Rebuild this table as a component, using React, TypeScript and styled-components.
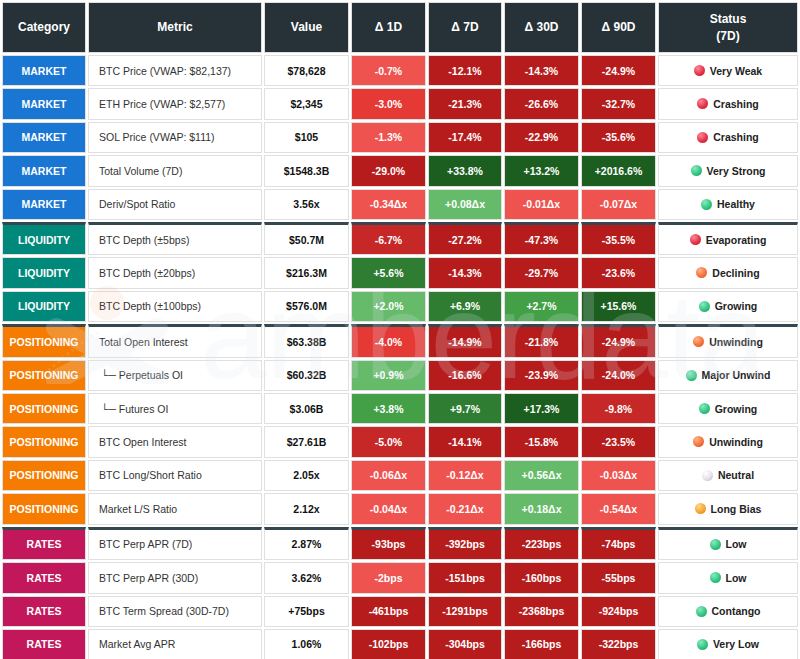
import React from "react";
import styled, { createGlobalStyle } from "styled-components";

const GlobalStyle = createGlobalStyle`
  html, body {
    margin: 0;
    padding: 0;
    background: #ffffff;
  }
  body {
    font-family: "Liberation Sans", Arial, sans-serif;
  }
`;

const Wrapper = styled.div`
  position: relative;
  width: 800px;
  overflow: hidden;
`;

const Table = styled.table`
  width: 800px;
  table-layout: fixed;
  border-collapse: separate;
  border-spacing: 2px;
  font-size: 10.5px;
`;

const Col = styled.col<{ $w: number }>`
  width: ${(p) => p.$w}px;
`;

const HeadCell = styled.th`
  background: #263238;
  color: #ffffff;
  font-size: 12px;
  font-weight: bold;
  line-height: 16.5px;
  padding: 8px 6px;
  border: 1px solid #e0e0e0;
  text-align: center;
`;

const Cell = styled.td<{ $groupStart?: boolean }>`
  border: 1px solid #e0e0e0;
  border-top: ${(p) => (p.$groupStart ? "3px solid #37474f" : "1px solid #e0e0e0")};
  padding: 8.5px 8px;
  line-height: 12.4px;
  text-align: center;
  white-space: nowrap;
  overflow: hidden;
`;

const CategoryCell = styled(Cell)<{ $bg: string }>`
  background: ${(p) => p.$bg};
  color: #ffffff;
  font-weight: bold;
  padding-left: 2px;
  padding-right: 2px;
`;

const MetricCell = styled(Cell)<{ $sub?: boolean }>`
  text-align: left;
  color: #333333;
  padding-left: ${(p) => (p.$sub ? 12 : 10)}px;
`;

const ValueCell = styled(Cell)`
  color: #111111;
  font-weight: bold;
`;

const DeltaCell = styled(Cell)<{ $bg: string }>`
  background: ${(p) => p.$bg};
  color: #ffffff;
  font-weight: bold;
`;

const StatusCell = styled(Cell)`
  color: #222222;
  font-weight: bold;
`;

const Dot = styled.span<{ $c: [string, string, string] }>`
  display: inline-block;
  width: 11px;
  height: 11px;
  border-radius: 50%;
  margin-right: 5px;
  vertical-align: -1.5px;
  background: radial-gradient(
    circle at 35% 30%,
    ${(p) => p.$c[0]} 0%,
    ${(p) => p.$c[1]} 55%,
    ${(p) => p.$c[2]} 100%
  );
`;

const Watermark = styled.div`
  position: absolute;
  inset: 0;
  pointer-events: none;
`;

const MarkLogo = styled.svg`
  position: absolute;
  left: 38px;
  top: 284px;
`;

const MarkText = styled.div`
  position: absolute;
  left: 200px;
  top: 276px;
  font-size: 120px;
  line-height: 120px;
  letter-spacing: -1px;
  color: rgba(226, 229, 238, 0.2);
  white-space: nowrap;
`;

const CATEGORY = {
  MARKET: "#1976d2",
  LIQUIDITY: "#00897b",
  POSITIONING: "#f57c00",
  RATES: "#c2185b",
} as const;

type Category = keyof typeof CATEGORY;

const TONE = {
  L: "#ef5350",
  M: "#e53935",
  R: "#c62828",
  D: "#b71c1c",
  G1: "#66bb6a",
  G2: "#43a047",
  G3: "#2e7d32",
  G4: "#1b5e20",
} as const;

type Tone = keyof typeof TONE;

const DOT: Record<string, [string, string, string]> = {
  red: ["#ff8a96", "#e4344b", "#b3172c"],
  green: ["#86ecbb", "#35c583", "#1c9a5d"],
  orange: ["#ffb48c", "#f5733a", "#cf521b"],
  yellow: ["#ffd98a", "#f7a633", "#dc7c12"],
  white: ["#ffffff", "#e6e2ec", "#b5aec2"],
};

type Row = {
  cat: Category;
  metric: string;
  sub?: boolean;
  value: string;
  deltas: [string, Tone][];
  dot: keyof typeof DOT;
  status: string;
};

const ROWS: Row[] = [
  { cat: "MARKET", metric: "BTC Price (VWAP: $82,137)", value: "$78,628", deltas: [["-0.7%", "L"], ["-12.1%", "D"], ["-14.3%", "D"], ["-24.9%", "D"]], dot: "red", status: "Very Weak" },
  { cat: "MARKET", metric: "ETH Price (VWAP: $2,577)", value: "$2,345", deltas: [["-3.0%", "M"], ["-21.3%", "D"], ["-26.6%", "D"], ["-32.7%", "D"]], dot: "red", status: "Crashing" },
  { cat: "MARKET", metric: "SOL Price (VWAP: $111)", value: "$105", deltas: [["-1.3%", "L"], ["-17.4%", "D"], ["-22.9%", "D"], ["-35.6%", "D"]], dot: "red", status: "Crashing" },
  { cat: "MARKET", metric: "Total Volume (7D)", value: "$1548.3B", deltas: [["-29.0%", "D"], ["+33.8%", "G4"], ["+13.2%", "G4"], ["+2016.6%", "G4"]], dot: "green", status: "Very Strong" },
  { cat: "MARKET", metric: "Deriv/Spot Ratio", value: "3.56x", deltas: [["-0.34Δx", "L"], ["+0.08Δx", "G1"], ["-0.01Δx", "L"], ["-0.07Δx", "L"]], dot: "green", status: "Healthy" },
  { cat: "LIQUIDITY", metric: "BTC Depth (±5bps)", value: "$50.7M", deltas: [["-6.7%", "R"], ["-27.2%", "D"], ["-47.3%", "D"], ["-35.5%", "D"]], dot: "red", status: "Evaporating" },
  { cat: "LIQUIDITY", metric: "BTC Depth (±20bps)", value: "$216.3M", deltas: [["+5.6%", "G3"], ["-14.3%", "D"], ["-29.7%", "D"], ["-23.6%", "D"]], dot: "orange", status: "Declining" },
  { cat: "LIQUIDITY", metric: "BTC Depth (±100bps)", value: "$576.0M", deltas: [["+2.0%", "G1"], ["+6.9%", "G3"], ["+2.7%", "G2"], ["+15.6%", "G4"]], dot: "green", status: "Growing" },
  { cat: "POSITIONING", metric: "Total Open Interest", value: "$63.38B", deltas: [["-4.0%", "M"], ["-14.9%", "D"], ["-21.8%", "D"], ["-24.9%", "D"]], dot: "orange", status: "Unwinding" },
  { cat: "POSITIONING", metric: "└─ Perpetuals OI", sub: true, value: "$60.32B", deltas: [["+0.9%", "G1"], ["-16.6%", "D"], ["-23.9%", "D"], ["-24.0%", "D"]], dot: "green", status: "Major Unwind" },
  { cat: "POSITIONING", metric: "└─ Futures OI", sub: true, value: "$3.06B", deltas: [["+3.8%", "G2"], ["+9.7%", "G3"], ["+17.3%", "G4"], ["-9.8%", "R"]], dot: "green", status: "Growing" },
  { cat: "POSITIONING", metric: "BTC Open Interest", value: "$27.61B", deltas: [["-5.0%", "R"], ["-14.1%", "D"], ["-15.8%", "D"], ["-23.5%", "D"]], dot: "orange", status: "Unwinding" },
  { cat: "POSITIONING", metric: "BTC Long/Short Ratio", value: "2.05x", deltas: [["-0.06Δx", "L"], ["-0.12Δx", "L"], ["+0.56Δx", "G1"], ["-0.03Δx", "L"]], dot: "white", status: "Neutral" },
  { cat: "POSITIONING", metric: "Market L/S Ratio", value: "2.12x", deltas: [["-0.04Δx", "L"], ["-0.21Δx", "L"], ["+0.18Δx", "G1"], ["-0.54Δx", "L"]], dot: "yellow", status: "Long Bias" },
  { cat: "RATES", metric: "BTC Perp APR (7D)", value: "2.87%", deltas: [["-93bps", "D"], ["-392bps", "D"], ["-223bps", "D"], ["-74bps", "D"]], dot: "green", status: "Low" },
  { cat: "RATES", metric: "BTC Perp APR (30D)", value: "3.62%", deltas: [["-2bps", "L"], ["-151bps", "D"], ["-160bps", "D"], ["-55bps", "D"]], dot: "green", status: "Low" },
  { cat: "RATES", metric: "BTC Term Spread (30D-7D)", value: "+75bps", deltas: [["-461bps", "D"], ["-1291bps", "D"], ["-2368bps", "D"], ["-924bps", "D"]], dot: "green", status: "Contango" },
  { cat: "RATES", metric: "Market Avg APR", value: "1.06%", deltas: [["-102bps", "D"], ["-304bps", "D"], ["-166bps", "D"], ["-322bps", "D"]], dot: "green", status: "Very Low" },
];

const WIDTHS = [84, 174, 85, 75, 74, 75, 75, 140];

function LogoMark() {
  return (
    <MarkLogo width="160" height="100" viewBox="0 0 160 100">
      <circle cx="69" cy="19" r="17" fill="rgba(244, 110, 70, 0.08)" />
      <path
        d="M6 90 C 30 70, 45 55, 62 48"
        stroke="rgba(210, 214, 228, 0.18)"
        strokeWidth="3"
        strokeDasharray="2 4"
        fill="none"
      />
      <path
        d="M18 44 L 120 96 M18 96 L 120 44"
        stroke="rgba(226, 229, 238, 0.2)"
        strokeWidth="20"
        strokeLinecap="round"
        fill="none"
      />
    </MarkLogo>
  );
}

export default function App() {
  return (
    <>
      <GlobalStyle />
      <Wrapper>
        <Table>
          <colgroup>
            {WIDTHS.map((w, i) => (
              <Col key={i} $w={w} />
            ))}
          </colgroup>
          <thead>
            <tr>
              <HeadCell>Category</HeadCell>
              <HeadCell>Metric</HeadCell>
              <HeadCell>Value</HeadCell>
              <HeadCell>Δ 1D</HeadCell>
              <HeadCell>Δ 7D</HeadCell>
              <HeadCell>Δ 30D</HeadCell>
              <HeadCell>Δ 90D</HeadCell>
              <HeadCell>
                Status
                <br />
                (7D)
              </HeadCell>
            </tr>
          </thead>
          <tbody>
            {ROWS.map((row, i) => {
              const groupStart = i > 0 && ROWS[i - 1].cat !== row.cat;
              return (
                <tr key={i}>
                  <CategoryCell $groupStart={groupStart} $bg={CATEGORY[row.cat]}>
                    {row.cat}
                  </CategoryCell>
                  <MetricCell $groupStart={groupStart} $sub={row.sub}>
                    {row.metric}
                  </MetricCell>
                  <ValueCell $groupStart={groupStart}>{row.value}</ValueCell>
                  {row.deltas.map(([text, tone], j) => (
                    <DeltaCell key={j} $groupStart={groupStart} $bg={TONE[tone]}>
                      {text}
                    </DeltaCell>
                  ))}
                  <StatusCell $groupStart={groupStart}>
                    <Dot $c={DOT[row.dot]} />
                    {row.status}
                  </StatusCell>
                </tr>
              );
            })}
          </tbody>
        </Table>
        <Watermark>
          <LogoMark />
          <MarkText>amberdata</MarkText>
        </Watermark>
      </Wrapper>
    </>
  );
}
